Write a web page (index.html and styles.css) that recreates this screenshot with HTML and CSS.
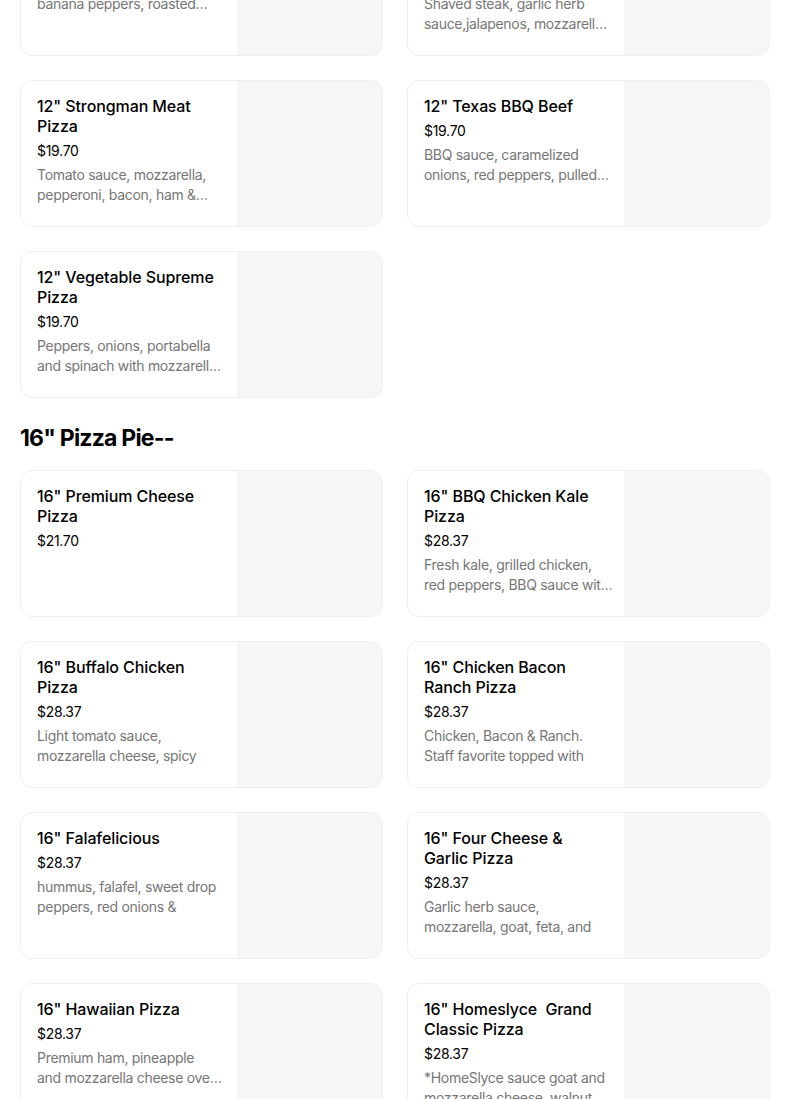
FILE: index.html
```html
<!DOCTYPE html>
<html lang="en">
<head>
<meta charset="utf-8">
<title>Menu</title>
<link rel="stylesheet" href="styles.css">
</head>
<body>
<main class="menu">
  <section class="section section-first">
    <div class="grid">
      <article class="card">
        <div class="info">
          <h3 class="name">12" Buffalo Chicken</h3>
          <div class="price">$19.70</div>
          <p class="desc"><span class="line">Mozzarella, spicy chicken,</span><span class="line">banana peppers, roasted…</span></p>
        </div>
        <div class="thumb"></div>
      </article>
      <article class="card">
        <div class="info">
          <h3 class="name">12" Philly Cheesesteak Pizza</h3>
          <div class="price">$19.70</div>
          <p class="desc"><span class="line">Shaved steak, garlic herb</span><span class="line">sauce,jalapenos, mozzarell…</span></p>
        </div>
        <div class="thumb"></div>
      </article>
      <article class="card">
        <div class="info">
          <h3 class="name">12" Strongman Meat Pizza</h3>
          <div class="price">$19.70</div>
          <p class="desc"><span class="line">Tomato sauce, mozzarella,</span><span class="line">pepperoni, bacon, ham &amp;…</span></p>
        </div>
        <div class="thumb"></div>
      </article>
      <article class="card">
        <div class="info">
          <h3 class="name">12" Texas BBQ Beef</h3>
          <div class="price">$19.70</div>
          <p class="desc"><span class="line">BBQ sauce, caramelized</span><span class="line">onions, red peppers, pulled…</span></p>
        </div>
        <div class="thumb"></div>
      </article>
      <article class="card">
        <div class="info">
          <h3 class="name">12" Vegetable Supreme Pizza</h3>
          <div class="price">$19.70</div>
          <p class="desc"><span class="line">Peppers, onions, portabella</span><span class="line">and spinach with mozzarell…</span></p>
        </div>
        <div class="thumb"></div>
      </article>
    </div>
  </section>

  <section class="section">
    <h2 class="section-title">16" Pizza Pie--</h2>
    <div class="grid">
      <article class="card">
        <div class="info">
          <h3 class="name">16" Premium Cheese Pizza</h3>
          <div class="price">$21.70</div>
        </div>
        <div class="thumb"></div>
      </article>
      <article class="card">
        <div class="info">
          <h3 class="name">16" BBQ Chicken Kale Pizza</h3>
          <div class="price">$28.37</div>
          <p class="desc"><span class="line">Fresh kale, grilled chicken,</span><span class="line">red peppers, BBQ sauce wit…</span></p>
        </div>
        <div class="thumb"></div>
      </article>
      <article class="card">
        <div class="info">
          <h3 class="name">16" Buffalo Chicken Pizza</h3>
          <div class="price">$28.37</div>
          <p class="desc"><span class="line">Light tomato sauce,</span><span class="line">mozzarella cheese, spicy</span></p>
        </div>
        <div class="thumb"></div>
      </article>
      <article class="card">
        <div class="info">
          <h3 class="name">16" Chicken Bacon Ranch Pizza</h3>
          <div class="price">$28.37</div>
          <p class="desc"><span class="line">Chicken, Bacon &amp; Ranch.</span><span class="line">Staff favorite topped with</span></p>
        </div>
        <div class="thumb"></div>
      </article>
      <article class="card">
        <div class="info">
          <h3 class="name">16" Falafelicious</h3>
          <div class="price">$28.37</div>
          <p class="desc"><span class="line">hummus, falafel, sweet drop</span><span class="line">peppers, red onions &amp;</span></p>
        </div>
        <div class="thumb"></div>
      </article>
      <article class="card">
        <div class="info">
          <h3 class="name">16" Four Cheese &amp; Garlic Pizza</h3>
          <div class="price">$28.37</div>
          <p class="desc"><span class="line">Garlic herb sauce,</span><span class="line">mozzarella, goat, feta, and</span></p>
        </div>
        <div class="thumb"></div>
      </article>
      <article class="card">
        <div class="info">
          <h3 class="name">16" Hawaiian Pizza</h3>
          <div class="price">$28.37</div>
          <p class="desc"><span class="line">Premium ham, pineapple</span><span class="line">and mozzarella cheese ove…</span></p>
        </div>
        <div class="thumb"></div>
      </article>
      <article class="card">
        <div class="info">
          <h3 class="name">16" Homeslyce&nbsp; Grand Classic Pizza</h3>
          <div class="price">$28.37</div>
          <p class="desc"><span class="line">*HomeSlyce sauce goat and</span><span class="line">mozzarella cheese, walnut</span></p>
        </div>
        <div class="thumb"></div>
      </article>
    </div>
  </section>
</main>
</body>
</html>
```

FILE: styles.css
```css
* {
  box-sizing: border-box;
}

html, body {
  margin: 0;
  padding: 0;
  background: #ffffff;
}

body {
  font-family: Inter, "Noto Sans", "Liberation Sans", sans-serif;
  color: #000000;
}

.menu {
  width: 750px;
  margin-left: 20px;
}

.section-first {
  margin-top: -91px;
}

.section-title {
  margin: 24px 0 16px;
  font-size: 23px;
  line-height: 32px;
  font-weight: 700;
  letter-spacing: -0.8px;
}

.grid {
  display: grid;
  grid-template-columns: 1fr 1fr;
  gap: 24px;
}

.card {
  display: flex;
  height: 147px;
  border: 1px solid #efefef;
  border-radius: 12px;
  overflow: hidden;
  background: #ffffff;
}

.info {
  flex: 1;
  min-width: 0;
  padding: 15px 16px 16px;
}

.name {
  margin: 0;
  font-size: 16px;
  line-height: 20px;
  font-weight: 500;
  letter-spacing: -0.1px;
}

.price {
  margin-top: 5px;
  font-size: 14px;
  line-height: 20px;
  letter-spacing: -0.3px;
}

.desc {
  margin: 4px 0 0;
  font-size: 14px;
  line-height: 20px;
  color: #767676;
  letter-spacing: -0.3px;
}

.line {
  display: block;
  white-space: nowrap;
}

.thumb {
  flex: 0 0 145px;
  background: #f6f6f6;
}
```
